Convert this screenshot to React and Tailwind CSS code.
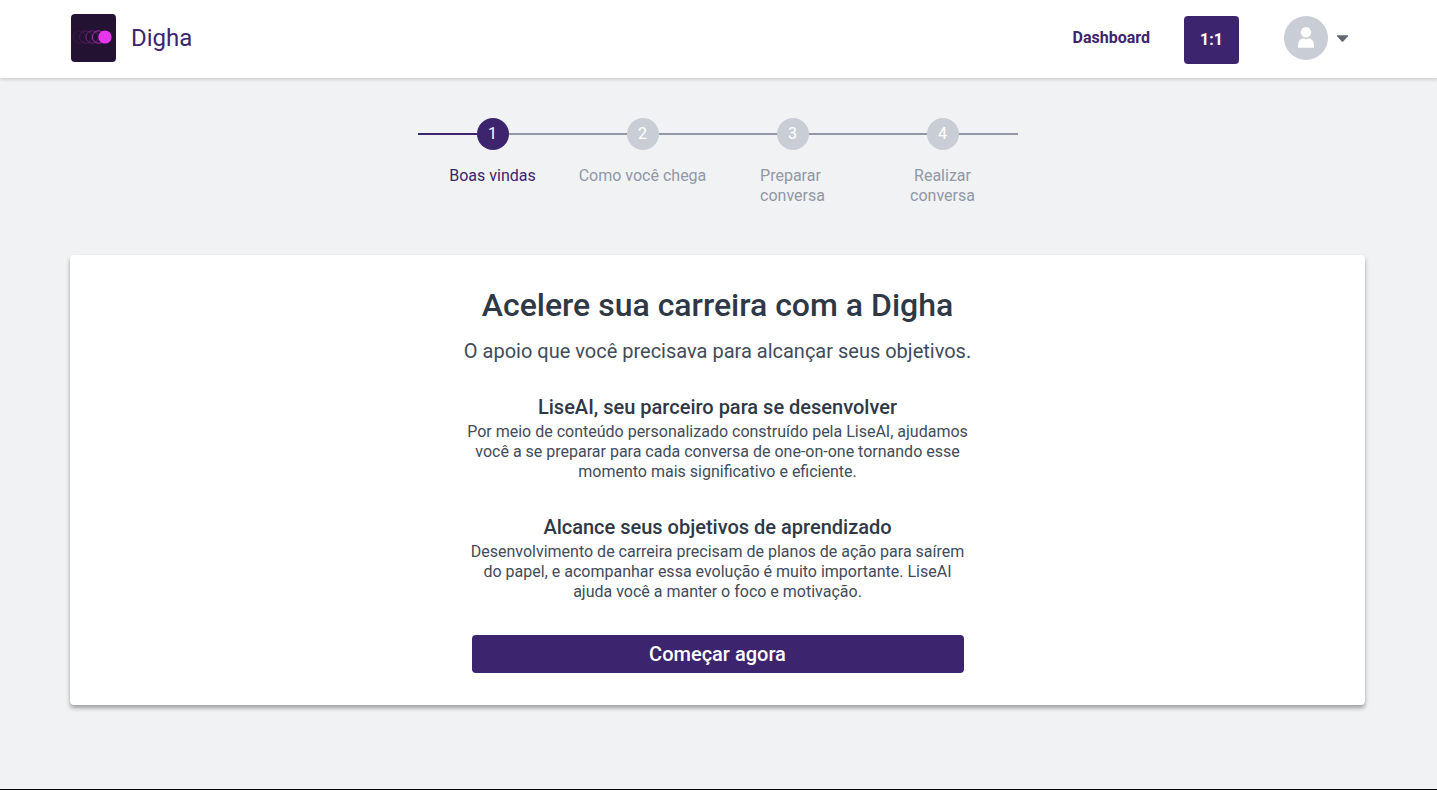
const steps = [
  { label: 'Boas vindas', align: 'text-center', active: true },
  { label: 'Como você chega', align: 'text-center' },
  { label: 'Preparar conversa', align: 'text-left', narrow: true },
  { label: 'Realizar conversa', align: 'text-center', narrow: true },
];

const sections = [
  {
    title: 'LiseAI, seu parceiro para se desenvolver',
    text: 'Por meio de conteúdo personalizado construído pela LiseAI, ajudamos você a se preparar para cada conversa de one-on-one tornando esse momento mais significativo e eficiente.',
  },
  {
    title: 'Alcance seus objetivos de aprendizado',
    text: 'Desenvolvimento de carreira precisam de planos de ação para saírem do papel, e acompanhar essa evolução é muito importante. LiseAI ajuda você a manter o foco e motivação.',
  },
];

function Logo() {
  return (
    <svg className="h-12 w-[45px] rounded" viewBox="0 0 45 48" aria-hidden="true">
      <rect width="45" height="48" fill="#241233" />
      <g fill="none" stroke="#e835ee">
        <circle cx="8.5" cy="23" r="6.2" strokeWidth="0.6" opacity="0.2" />
        <circle cx="14.8" cy="23" r="6.2" strokeWidth="0.6" opacity="0.35" />
        <circle cx="21.2" cy="23" r="6.2" strokeWidth="0.7" opacity="0.5" />
        <circle cx="27.6" cy="23" r="6.2" strokeWidth="0.9" opacity="0.75" />
      </g>
      <circle cx="34" cy="23" r="6.6" fill="#e835ee" />
    </svg>
  );
}

function Header() {
  return (
    <header className="relative bg-white shadow-[0_1px_4px_rgba(0,0,0,0.2)]">
      <div className="flex h-[78px] items-start justify-between pr-[89px] pl-[71px]">
        <a href="#inicio" className="flex items-center gap-[15px] pt-3.5 text-2xl text-[#3c256e]">
          <Logo />
          <span>Digha</span>
        </a>
        <nav className="flex items-center pt-4">
          <a href="#dashboard" className="mr-[34px] pb-1 text-base font-bold text-[#3c256e]">
            Dashboard
          </a>
          <button type="button" className="mr-[45px] h-12 w-[55px] rounded bg-[#3c256e] text-base font-bold text-white">
            1:1
          </button>
          <button type="button" aria-label="Menu do usuário" className="flex items-center gap-[9px] pb-1">
            <svg className="size-11" viewBox="0 0 44 44" aria-hidden="true">
              <circle cx="22" cy="22" r="22" fill="#c9ced6" />
              <circle cx="22" cy="16.3" r="5.2" fill="#fff" />
              <path d="M14 31.8v-2.6c0-4 2.5-6.7 5.6-6.7c.8 0 1.4.5 2.4.5s1.6-.5 2.4-.5c3.1 0 5.600 2.7 5.600 6.700v2.600z" fill="#fff" />
            </svg>
            <svg className="h-[7px] w-[11px]" viewBox="0 0 11 7" aria-hidden="true">
              <path d="M.5.3h10c.5 0 .7.5.4.9L6.2 6.500c-.4.4-1 .4-1.400 0L.1 1.200C-.2.8 0 .3.5.3z" fill="#5f6871" />
            </svg>
          </button>
        </nav>
      </div>
    </header>
  );
}

function Stepper() {
  return (
    <ol className="mx-auto grid w-full max-w-[600px] grid-cols-4">
      {steps.map((step, i) => (
        <li key={step.label} className="flex flex-col items-center">
          <div className="flex w-full items-center">
            <span className={`h-0.5 flex-1 ${step.active ? 'bg-[#3c256e]' : 'bg-[#9197a6]'}`} />
            <span
              className={`flex size-8 items-center justify-center rounded-full text-base text-white ${step.active ? 'bg-[#3c256e]' : 'bg-[#c9ced6]'}`}
            >
              {i + 1}
            </span>
            <span className="h-0.5 flex-1 bg-[#9197a6]" />
          </div>
          <span
            className={`mt-4 text-base leading-5 ${step.align} ${step.narrow ? 'w-min' : ''} ${step.active ? 'text-[#3c256e]' : 'text-[#9197a6]'}`}
          >
            {step.label}
          </span>
        </li>
      ))}
    </ol>
  );
}

export default function App() {
  return (
    <div className="flex min-h-screen flex-col border-b border-black bg-[#f0f2f4] font-[Roboto,sans-serif]">
      <Header />
      <main className="pt-10 pr-[72px] pb-16 pl-[70px]">
        <Stepper />
        <div className="mt-[49px] rounded bg-white px-8 py-8 text-center text-[#414b5a] shadow-[0_3px_4px_rgba(0,0,0,0.35)]">
          <h1 className="text-[32px] leading-9 font-medium text-[#2f3846]">Acelere sua carreira com a Digha</h1>
          <p className="mt-4 text-xl leading-6">O apoio que você precisava para alcançar seus objetivos.</p>
          <div className="mx-auto mt-[29px] max-w-[504px]">
            <div className="flex flex-col gap-[30px]">
              {sections.map((section) => (
                <section key={section.title}>
                  <h2 className="text-xl leading-[30px] font-medium text-[#2f3846]">{section.title}</h2>
                  <p className="text-base leading-5">{section.text}</p>
                </section>
              ))}
            </div>
            <div className="mt-[33px] px-1.5">
              <button type="button" className="block h-[38px] w-full rounded bg-[#3c256e] text-xl font-medium text-white">
                Começar agora
              </button>
            </div>
          </div>
        </div>
      </main>
    </div>
  );
}
